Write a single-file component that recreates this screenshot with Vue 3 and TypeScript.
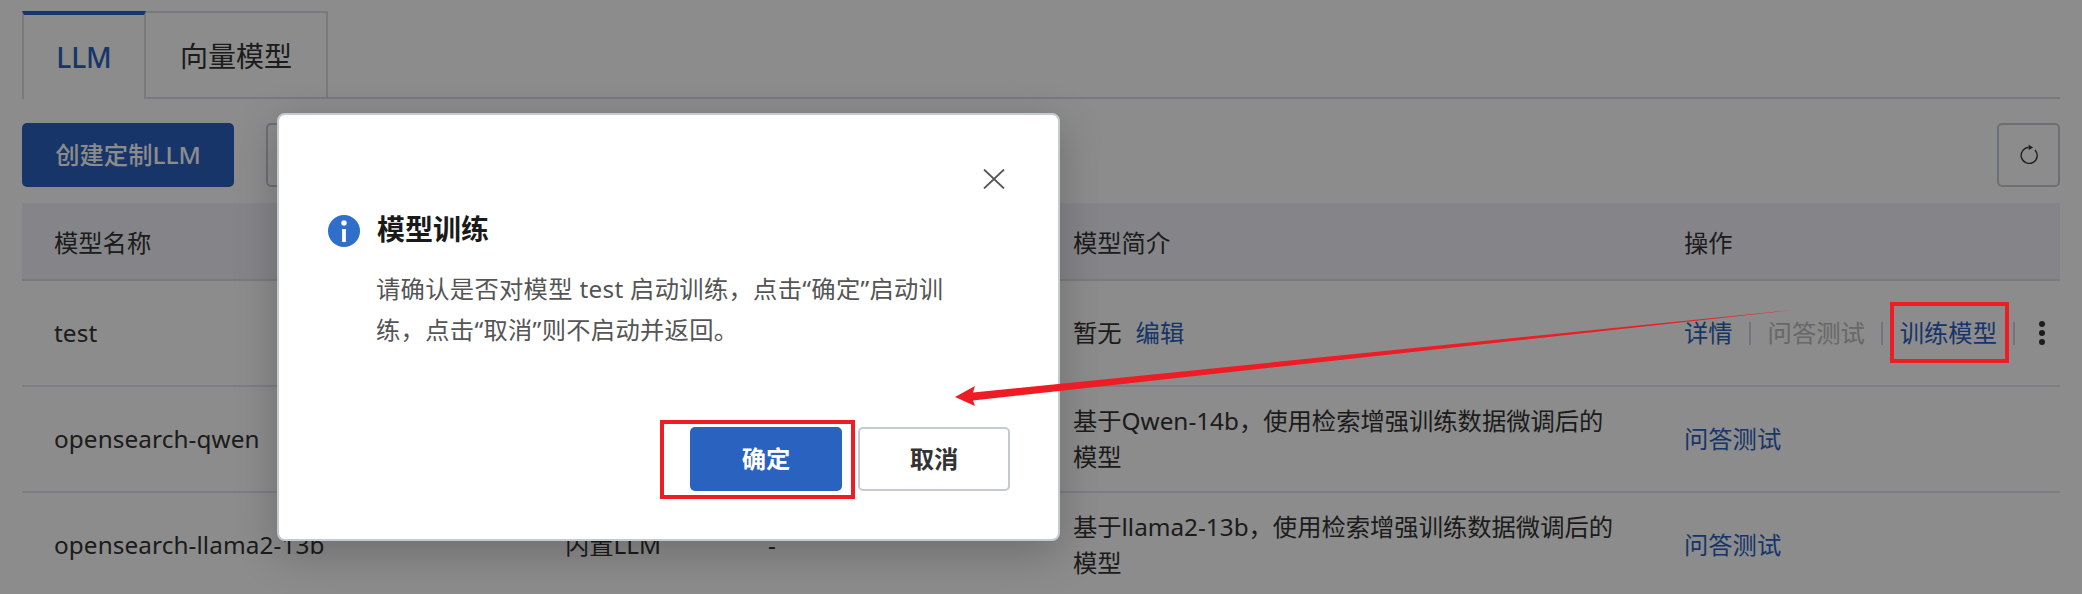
<script setup lang="ts">
import { ref } from 'vue'

interface ModelRow {
  name: string
  kind: string
  status: string
  intro: string
  editable?: boolean
  full?: boolean
}

// the first two rows sit behind the dialog in their kind and status columns
const rows = ref<ModelRow[]>([
  { name: 'test', kind: '', status: '', intro: '暂无', editable: true, full: true },
  { name: 'opensearch-qwen', kind: '', status: '', intro: '基于Qwen-14b，使用检索增强训练数据微调后的模型' },
  { name: 'opensearch-llama2-13b', kind: '内置LLM', status: '-', intro: '基于llama2-13b，使用检索增强训练数据微调后的模型' }
])
</script>

<template>
  <div class="page" lang="zh-CN">
    <div class="tabs">
      <div class="tab active">LLM</div>
      <div class="tab">向量模型</div>
    </div>

    <div class="toolbar">
      <button class="btn-create">创建定制LLM</button>
      <button class="btn-outline"></button>
      <button class="btn-refresh" aria-label="刷新">
        <svg width="22" height="24" viewBox="0 0 22 24" fill="none">
          <path d="M17 6.9A8 8 0 1 1 10.6 4.4" stroke="#3a3a3a" stroke-width="1.4" />
          <path d="M10.6 1.8 15.2 4.4 10.6 7Z" fill="#3a3a3a" />
        </svg>
      </button>
    </div>

    <table class="models">
      <thead>
        <tr>
          <th>模型名称</th>
          <th></th>
          <th></th>
          <th>模型简介</th>
          <th>操作</th>
        </tr>
      </thead>
      <tbody>
        <tr v-for="row in rows" :key="row.name">
          <td class="name">{{ row.name }}</td>
          <td>{{ row.kind }}</td>
          <td>{{ row.status }}</td>
          <td>
            <div class="intro">
              {{ row.intro }}<a v-if="row.editable" class="link edit">编辑</a>
            </div>
          </td>
          <td>
            <div v-if="row.full" class="ops">
              <a class="link">详情</a>
              <i class="sep"></i>
              <span class="disabled">问答测试</span>
              <i class="sep"></i>
              <a class="link">训练模型</a>
              <i class="sep"></i>
              <span class="more"><b></b><b></b><b></b></span>
            </div>
            <a v-else class="link">问答测试</a>
          </td>
        </tr>
      </tbody>
    </table>

    <div class="mask"></div>

    <div class="dialog">
      <div class="dialog-head">
        <svg width="22" height="20" viewBox="0 0 22 20" fill="none">
          <path d="M1 .5 21 19.5M21 .5 1 19.5" stroke="#555" stroke-width="1.8" />
        </svg>
      </div>
      <div class="dialog-title">
        <svg width="32" height="32" viewBox="0 0 32 32">
          <circle cx="16" cy="16" r="16" fill="#2f6ec9" />
          <circle cx="16" cy="8" r="2.7" fill="#fff" />
          <rect x="14.1" y="14" width="3.8" height="13" fill="#fff" />
        </svg>
        <h3>模型训练</h3>
      </div>
      <p class="dialog-body">请确认是否对模型 test 启动训练，点击“确定”启动训练，点击“取消”则不启动并返回。</p>
      <div class="dialog-foot">
        <button class="btn-ok">确定</button>
        <button class="btn-cancel">取消</button>
      </div>
    </div>

    <svg class="marks" width="2082" height="594" viewBox="0 0 2082 594">
      <rect x="662" y="422" width="191" height="75" fill="none" stroke="#ee1c25" stroke-width="4" />
      <rect x="1892" y="304" width="115" height="57" fill="none" stroke="#ee1c25" stroke-width="4" />
      <polygon points="955,397 975,386 973,392.5 1793,310 973,400.5 975,406" fill="#ee1c25" />
    </svg>
  </div>
</template>

<style>
html, body {
  margin: 0;
  overflow: hidden;
}
</style>

<style scoped>
.page {
  position: relative;
  width: 2082px;
  height: 594px;
  box-sizing: border-box;
  padding: 11px 22px 0;
  overflow: hidden;
  background: #fff;
  color: #333;
  font-family: "Noto Sans", "Noto Sans CJK SC", sans-serif;
  font-size: 24.3px;
}
.tabs {
  display: flex;
  height: 88px;
  box-sizing: border-box;
  border-bottom: 2px solid #dcdee2;
}
.tab {
  display: flex;
  align-items: center;
  justify-content: center;
  height: 88px;
  box-sizing: border-box;
  padding: 0 34px;
  border: 2px solid #dcdee2;
  border-left: 0;
  font-size: 28px;
  color: #333;
}
.tab.active {
  width: 124px;
  padding: 0;
  border: 0;
  border-top: 4px solid #2a62c0;
  border-left: 2px solid #dcdee2;
  border-right: 2px solid #dcdee2;
  background: #fff;
  color: #2a62c0;
  font-weight: 500;
}
.toolbar {
  display: flex;
  align-items: stretch;
  gap: 32px;
  height: 64px;
  margin-top: 24px;
}
button {
  font-family: inherit;
  font-size: 24.3px;
  padding: 0 0 4px;
}
.btn-create {
  width: 212px;
  border: 0;
  border-radius: 5px;
  background: #2a62c0;
  color: #fff;
  font-weight: 500;
}
.btn-outline {
  width: 140px;
  border: 2px solid #c5cad1;
  border-radius: 5px;
  background: #fff;
}
.btn-refresh {
  display: flex;
  align-items: center;
  justify-content: center;
  width: 63px;
  margin-left: auto;
  padding: 0;
  border: 2px solid #c5cad1;
  border-radius: 5px;
  background: #fff;
}
.models {
  width: 2038px;
  margin-top: 16px;
  border-collapse: collapse;
  table-layout: fixed;
}
.models th {
  height: 77px;
  box-sizing: border-box;
  padding: 0 0 0 32px;
  background: #f2f3f9;
  border-bottom: 2px solid #dcdee2;
  text-align: left;
  font-weight: 400;
}
.models th:nth-child(1) { width: 511px; }
.models th:nth-child(2) { width: 203px; }
.models th:nth-child(3) { width: 305px; }
.models th:nth-child(4) { width: 611px; }
.models td {
  height: 106px;
  box-sizing: border-box;
  padding: 0 0 0 32px;
  border-bottom: 2px solid #e3e5e8;
  line-height: 36px;
}
.models td.name {
  letter-spacing: 0.1px;
}
.intro {
  width: 545px;
}
.link {
  color: #2a62c0;
}
.edit {
  margin-left: 14px;
}
.ops {
  display: flex;
  align-items: center;
  gap: 16.5px;
}
.sep {
  width: 2px;
  height: 23px;
  background: #d4d6da;
}
.disabled {
  color: #bdbdbd;
}
.more {
  display: flex;
  flex-direction: column;
  gap: 3px;
  margin-left: 7px;
}
.more b {
  width: 6px;
  height: 6px;
  border-radius: 50%;
  background: #333;
}
.mask {
  position: absolute;
  inset: 0;
  background: rgba(0, 0, 0, 0.45);
}
.dialog {
  position: absolute;
  left: 277px;
  top: 113px;
  width: 783px;
  height: 428px;
  box-sizing: border-box;
  border: 2px solid #c3cad1;
  border-radius: 8px;
  background: #fff;
  box-shadow: 0 12px 44px rgba(0, 0, 0, 0.22);
}
.dialog-head {
  display: flex;
  justify-content: flex-end;
  height: 20px;
  padding: 54px 53px 0 0;
}
.dialog-title {
  display: flex;
  align-items: center;
  gap: 17px;
  margin-top: 26px;
  padding-left: 49px;
}
.dialog-title h3 {
  margin: 0 0 3px;
  font-size: 28px;
  line-height: 29px;
  font-weight: 700;
  color: #1a1a1a;
}
.dialog-body {
  width: 590px;
  margin: 21px 0 0 97px;
  line-height: 41px;
  color: #555;
  letter-spacing: 0.3px;
}
.dialog-foot {
  display: flex;
  justify-content: flex-end;
  gap: 16px;
  margin-top: 77px;
  padding-right: 48px;
}
.btn-ok,
.btn-cancel {
  width: 152px;
  height: 64px;
  border-radius: 5px;
  font-weight: 700;
}
.btn-ok {
  border: 0;
  background: #2a62c0;
  color: #fff;
}
.btn-cancel {
  border: 2px solid #c5cad1;
  background: #fff;
  color: #333;
}
.marks {
  position: absolute;
  left: 0;
  top: 0;
  pointer-events: none;
}
</style>
